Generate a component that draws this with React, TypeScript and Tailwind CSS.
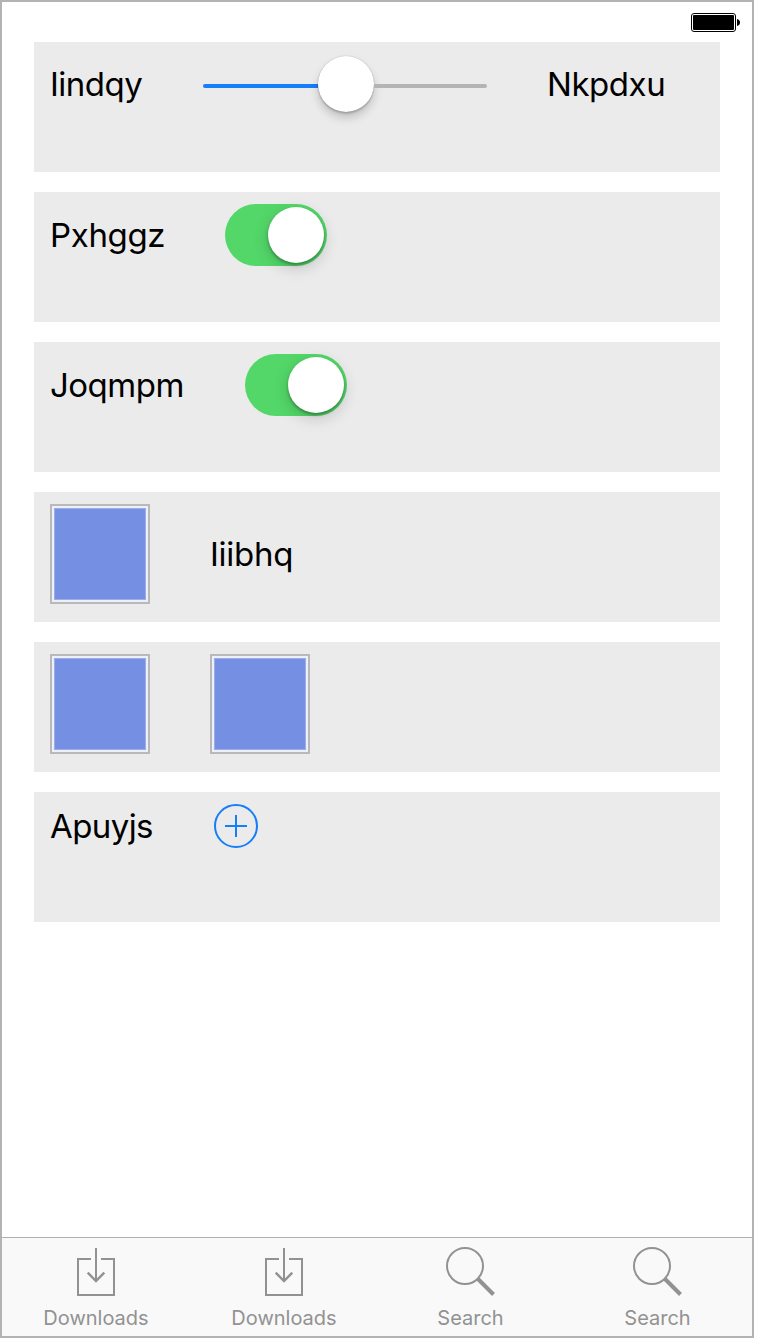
import type { ReactNode } from "react";

function Card({ children }: { children: ReactNode }) {
  return (
    <section className="flex h-[130px] items-start gap-[60px] bg-[#ebebeb] px-4 pt-3">
      {children}
    </section>
  );
}

function Label({ className, children }: { className: string; children: string }) {
  return (
    <span className={`block shrink-0 whitespace-nowrap text-[33px] leading-[41px] text-black ${className}`}>
      {children}
    </span>
  );
}

function Slider() {
  return (
    <div className="mt-0.5 flex h-[60px] w-[284px] items-center">
      <div className="h-1 w-[115px] rounded-l-full bg-[#157efb]" />
      <div className="-mt-1 size-14 shrink-0 rounded-full bg-white shadow-[0_0_1px_rgba(0,0,0,0.35),0_6px_10px_rgba(0,0,0,0.18),0_2px_2px_rgba(0,0,0,0.16)]" />
      <div className="h-1 flex-1 rounded-r-full bg-[#b4b4b4]" />
    </div>
  );
}

function Toggle() {
  return (
    <div className="flex h-[62px] w-[102px] items-center justify-end rounded-full bg-[#53d769] p-[3px]">
      <div className="size-14 rounded-full bg-white shadow-[0_5px_16px_rgba(0,0,0,0.18),0_2px_3px_rgba(0,0,0,0.3)]" />
    </div>
  );
}

function Swatch() {
  return (
    <div className="size-[100px] shrink-0 border-2 border-[#b9b9b9] bg-[#edf0fa] p-0.5">
      <div className="size-full border border-[#9caeea] bg-[#758fe3]" />
    </div>
  );
}

function AddIcon() {
  return (
    <svg className="size-11" viewBox="0 0 44 44" fill="none" stroke="#157efb" strokeWidth="2">
      <circle cx="22" cy="22" r="21" />
      <path d="M11 22H33M22 11V33" />
    </svg>
  );
}

function BatteryIcon() {
  return (
    <svg className="h-[19px] w-[49px]" viewBox="0 0 49 19">
      <rect x="0.5" y="0.5" width="44" height="18" rx="2.5" fill="none" stroke="#000" />
      <rect x="2" y="2" width="41" height="15" rx="1" />
      <path d="M46 6C50 6.5 50 12.5 46 13Z" />
    </svg>
  );
}

function DownloadIcon() {
  return (
    <svg className="h-[50px] w-[38px]" viewBox="0 0 38 50" fill="none" stroke="#929292" strokeWidth="2">
      <path d="M14 12H1V48H37V12H24" />
      <path d="M19 1V34" />
      <path d="M10.7 25.7L19 34L27.3 25.7" strokeWidth="2.4" />
    </svg>
  );
}

function SearchIcon() {
  return (
    <svg className="h-[50px] w-[49px]" viewBox="0 0 49 50" fill="none" stroke="#929292">
      <circle cx="19" cy="19" r="18" strokeWidth="2" />
      <path d="M32 32L47.5 47.5" strokeWidth="4" />
    </svg>
  );
}

function Tab({ icon, label, className }: { icon: ReactNode; label: string; className: string }) {
  return (
    <div className={`flex shrink-0 flex-col items-center pt-[9px] ${className}`}>
      {icon}
      <span className="mt-[9px] whitespace-nowrap text-[20px] leading-6 text-[#929292]">
        {label}
      </span>
    </div>
  );
}

export default function App() {
  return (
    <div className="h-[1340px] w-[760px] bg-white font-['Inter',sans-serif]">
      <div className="flex h-[1338px] w-[754px] flex-col border-2 border-[#b3b3b3]">
        <header className="flex h-10 shrink-0 justify-end pr-3 pt-[11px]">
          <BatteryIcon />
        </header>
        <main className="flex flex-1 flex-col gap-5 px-8">
          <Card>
            <Label className="mt-[10px] w-[93px] tracking-[-0.5px]">Iindqy</Label>
            <Slider />
            <Label className="mt-[10px] tracking-[-0.45px]">Nkpdxu</Label>
          </Card>
          <Card>
            <Label className="mt-[11px] w-[115px] tracking-[-0.35px]">Pxhggz</Label>
            <Toggle />
          </Card>
          <Card>
            <Label className="mt-[11px] w-[135px] tracking-[-0.5px]">Joqmpm</Label>
            <Toggle />
          </Card>
          <Card>
            <Swatch />
            <Label className="mt-[30px] tracking-[-0.25px]">Iiibhq</Label>
          </Card>
          <Card>
            <Swatch />
            <Swatch />
          </Card>
          <Card>
            <Label className="mt-[2px] w-[104px] tracking-[-0.6px]">Apuyjs</Label>
            <AddIcon />
          </Card>
        </main>
        <nav className="flex h-[99px] shrink-0 border-t border-[#b0b0b0] bg-[#f9f9f9]">
          <Tab icon={<DownloadIcon />} label="Downloads" className="w-[188px]" />
          <Tab icon={<DownloadIcon />} label="Downloads" className="w-[188px]" />
          <Tab icon={<SearchIcon />} label="Search" className="w-[185px]" />
          <Tab icon={<SearchIcon />} label="Search" className="w-[189px]" />
        </nav>
      </div>
    </div>
  );
}
